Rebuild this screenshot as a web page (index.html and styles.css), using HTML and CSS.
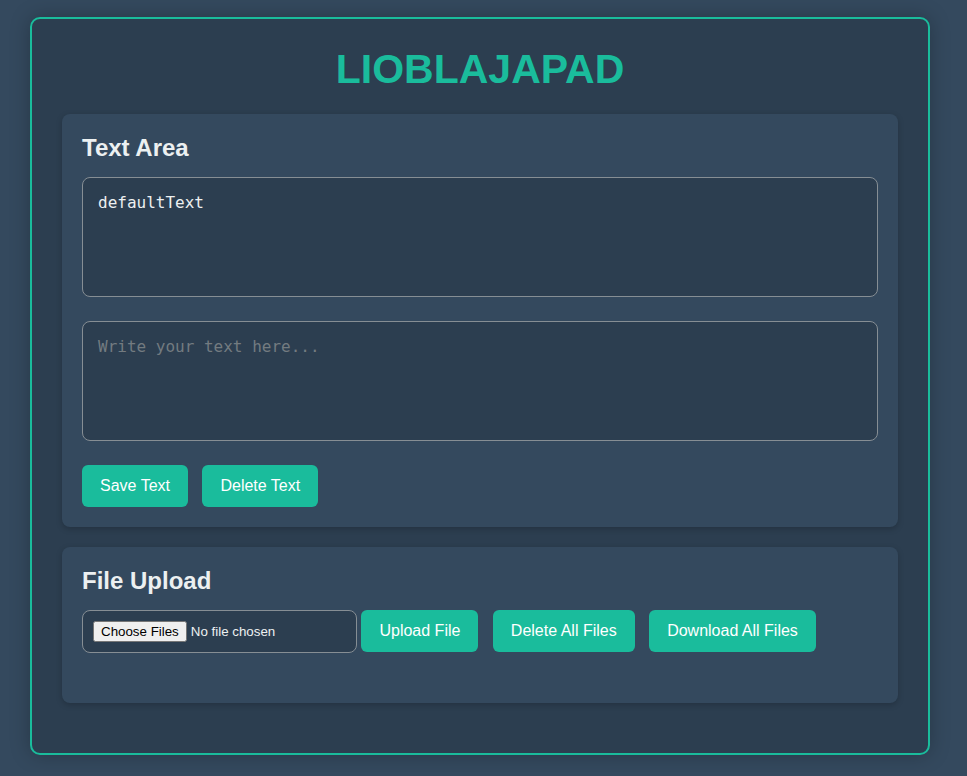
FILE: index.html
```html
<!DOCTYPE html>
<html lang="en">
<head>
    <meta charset="UTF-8">
    <meta name="viewport" content="width=device-width, initial-scale=1.0">
    <title>LIOBLAJAPAD</title>
    <link rel="stylesheet" href="styles.css">
</head>
<body>
    <div class="container">
        <h1>LIOBLAJAPAD</h1>

        <div class="section">
            <h2>Text Area</h2>
            <textarea id="saved_text" class="text-box" readonly>defaultText</textarea>
            <textarea id="new_text" class="text-box" placeholder="Write your text here..."></textarea>
            <button id="save_btn">Save Text</button>
            <button id="delete_btn">Delete Text</button>
        </div>

        <div class="section">
            <h2>File Upload</h2>
            <input type="file" id="file_input" multiple>
            <button id="upload_btn">Upload File</button>
            <button id="delete_files_btn">Delete All Files</button>
            <button id="download_btn">Download All Files</button>
            <div id="file_list"></div>
        </div>
    </div>
</body>
</html>
```

FILE: styles.css
```css
body {
    background-color: #34495e;
    color: #ecf0f1;
    font-family: "Liberation Sans", Arial, sans-serif;
    margin: 0;
    padding: 17px 30px;
}
.container {
    width: 900px;
    box-sizing: border-box;
    background-color: #2c3e50;
    border: 2px solid #1abc9c;
    border-radius: 10px;
    padding: 27px 30px 30px;
    box-shadow: 0 0 20px rgba(0, 0, 0, 0.25);
}
h1 {
    color: #1abc9c;
    text-align: center;
    font-size: 41px;
    margin: 0 0 21px;
}
h2 {
    font-size: 24px;
    margin: 0 0 15px;
    color: #ecf0f1;
}
.section {
    background-color: #34495e;
    border-radius: 8px;
    padding: 20px;
    margin-bottom: 20px;
    box-shadow: 0 2px 6px rgba(0, 0, 0, 0.2);
}
.text-box {
    display: block;
    width: 100%;
    height: 120px;
    box-sizing: border-box;
    background-color: #2c3e50;
    color: #ecf0f1;
    border: 1px solid #868e94;
    border-radius: 8px;
    padding: 15px;
    margin: 0 0 24px;
    font-family: "DejaVu Sans Mono", monospace;
    font-size: 16px;
    resize: none;
}
.text-box::placeholder {
    color: #737b80;
}
button {
    background-color: #1abc9c;
    color: #fff;
    border: none;
    border-radius: 6px;
    padding: 12px 18px;
    margin: 0 10px 0 0;
    font-family: "Liberation Sans", Arial, sans-serif;
    font-size: 16px;
    cursor: pointer;
    vertical-align: top;
}
button:hover {
    background-color: #16a085;
}
#file_input {
    width: 275px;
    box-sizing: border-box;
    background-color: #2c3e50;
    color: #ecf0f1;
    border: 1px solid #868e94;
    border-radius: 8px;
    padding: 10px;
    vertical-align: top;
}
#file_list {
    margin-top: 30px;
}
```
